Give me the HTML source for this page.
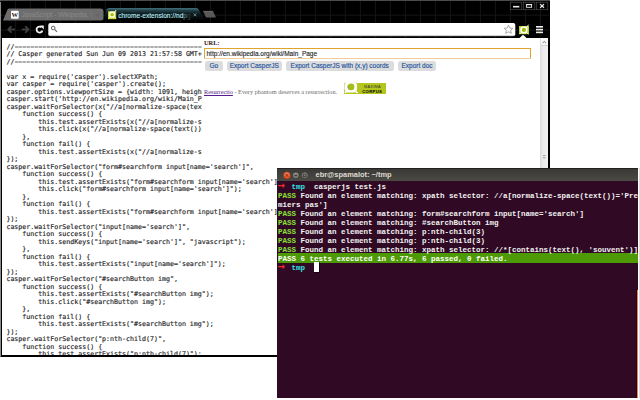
<!DOCTYPE html>
<html><head><meta charset="utf-8">
<style>
html,body{margin:0;padding:0;background:#fff;}
body{width:640px;height:400px;position:relative;overflow:hidden;font-family:"Liberation Sans",sans-serif;}
#br{position:absolute;left:0;top:0;width:550px;height:357px;background:#000;overflow:hidden;border-radius:2px 2px 0 1.5px;}
#content{position:absolute;left:2px;top:38px;width:546px;height:317px;background:#fff;overflow:hidden;}
pre#code{position:absolute;left:4.4px;top:5.6px;-webkit-text-stroke:0.14px #1e1e26;margin:0;font-family:"DejaVu Sans Mono","Liberation Mono",monospace;font-size:6.64px;line-height:7.5px;color:#1a1a1a;white-space:pre;}

#panel{position:absolute;left:200px;top:0;width:338px;height:124px;background:#fff;}
#panel .lbl{position:absolute;left:2px;top:0.4px;font-family:"Liberation Serif",serif;font-weight:bold;font-size:6.4px;line-height:9px;color:#301010;}
#panel .inp{position:absolute;left:2px;top:10.3px;width:327px;height:11.2px;border:1px solid #dfa52c;border-bottom-color:#f0cf9a;border-radius:1px;box-sizing:border-box;font-size:6.5px;line-height:9px;padding-left:1.5px;color:#1a1a22;-webkit-text-stroke:0.12px #1a1a22;background:#fff;}
.btn{position:absolute;top:23px;height:10.4px;background:#dcdcdc;border-radius:2.8px;font-size:6.5px;line-height:10.6px;color:#24549f;-webkit-text-stroke:0.15px #24549f;text-align:center;}
#tag{position:absolute;left:2px;top:49.5px;font-family:"Liberation Serif",serif;font-size:6.28px;line-height:8px;color:#6e6e6e;white-space:nowrap;}
#tag u{color:#551a8b;}
#logo{position:absolute;left:142px;top:44.8px;width:41.8px;height:11px;background:#b4c61c;}
#sb{position:absolute;left:538.3px;top:0;width:7.7px;height:317px;background:linear-gradient(90deg,#dcdcdc,#ececec 40%,#f1f1f1);}
#sb .up{position:absolute;left:0.7px;top:0;width:7px;height:7.6px;background:#fbfbfb;border-bottom:0.6px solid #d0d0d0;box-sizing:border-box;}

#term{position:absolute;left:277px;top:168px;width:361.4px;height:229.6px;background:#300a24;overflow:hidden;}
#tbar{position:absolute;left:0;top:0;width:362px;height:12.5px;background:linear-gradient(#3a3935,#4b4a45);border-top:0.5px solid #222;box-sizing:border-box;}
#tbar .t{position:absolute;left:38.5px;top:1.3px;font-size:7.45px;line-height:10px;font-weight:bold;color:#dfdbd2;white-space:nowrap;}
#tbar i{position:absolute;top:2.3px;width:7.4px;height:7.4px;border-radius:50%;box-sizing:border-box;}
pre#tt{position:absolute;left:1px;top:14.5px;margin:0;font-family:"Liberation Mono","DejaVu Sans Mono",monospace;font-size:7.5px;line-height:9px;color:#f2f2f2;white-space:pre;font-weight:bold;}
#tt .g{color:#8ae234;} #tt .r{color:#ef2929;font-family:"DejaVu Sans Mono",monospace;font-size:12px;font-weight:bold;display:inline-block;width:4.5px;height:9px;line-height:4.5px;vertical-align:top;overflow:visible;text-indent:-0.6px;} #tt .c{color:#34e2e2;}
#tt .bar{color:#fff;}
#gbar{position:absolute;left:0.6px;top:84.8px;width:361px;height:10px;background:#4e9a06;}
#cur{position:absolute;left:36.8px;top:94.3px;width:4.9px;height:9.6px;background:#fff;box-shadow:0.5px 0.5px 0 0.3px #12030c;}
#tsb{position:absolute;left:359px;top:121.5px;width:2.5px;height:108.5px;background:#f07c4a;border-left:0.8px solid #1a0512;box-sizing:border-box;}
#redge{position:absolute;left:638.5px;top:168px;width:1.5px;height:230px;background:#e2dcdc;}
#ledge{position:absolute;left:0;top:2px;width:1px;height:354px;background:#8c8c8c;}
#code .eq{color:#6c6c6c;-webkit-text-stroke:0;}
</style></head><body>
<div id="br">

<svg id="hdr" width="550" height="38" viewBox="0 0 550 38" style="position:absolute;left:0;top:0">
<defs>
<linearGradient id="atab" x1="0" y1="0" x2="0" y2="1"><stop offset="0" stop-color="#2c5560"/><stop offset="0.45" stop-color="#0c1c20"/><stop offset="1" stop-color="#000"/></linearGradient>
<linearGradient id="omni" x1="0" y1="0" x2="0" y2="1"><stop offset="0" stop-color="#fff"/><stop offset="0.9" stop-color="#fff"/><stop offset="1" stop-color="#999"/></linearGradient>
</defs>
<rect x="0" y="0" width="550" height="38" fill="#000"/>
<path d="M15.4,1V38M30.4,1V38M45.4,1V38M60.4,1V38M75.4,1V38M90.4,1V38M105.4,1V38M120.4,1V38M135.4,1V38M150.4,1V38M165.4,1V38M180.4,1V38M195.4,1V38M210.4,1V38M225.4,1V38M240.4,1V38M255.4,1V38M270.4,1V38M285.4,1V38M300.4,1V38M315.4,1V38M330.4,1V38M345.4,1V38M360.4,1V38M375.4,1V38M390.4,1V38M405.4,1V38M420.4,1V38M435.4,1V38M450.4,1V38M465.4,1V38M480.4,1V38M495.4,1V38M510.4,1V38M525.4,1V38M540.4,1V38M1,15.2H549M1,30.2H549" stroke="#171717" stroke-width="0.9" fill="none"/>
<rect x="0" y="0" width="550" height="1" fill="#4c4c4c"/>
<!-- inactive tab -->
<path d="M3,20.5 L7.5,9.5 Q8,8.4 9.5,8.4 L100.5,8.4 Q103.5,8.4 103.5,11.5 L103.5,18 Q103.5,20.5 101,20.5 Z" fill="#6d6d6d"/>
<rect x="11" y="10.8" width="7.7" height="7.9" rx="1" fill="#fff"/>
<text x="14.85" y="17" font-family="Liberation Serif,serif" font-size="6.5" font-weight="bold" text-anchor="middle" fill="#222">W</text>
<text x="21.5" y="17.3" font-family="Liberation Sans,sans-serif" font-size="6.6" fill="#8a8a8a">JavaScript - Wikipedia, <tspan fill="#7a7a7a">t</tspan></text>
<path d="M96.3,13.8 l2.5,2.5 m0,-2.5 l-2.5,2.5" stroke="#5a5a5a" stroke-width="0.7" fill="none"/>
<!-- active tab -->
<path d="M103.5,20.6 L106.5,10 Q107,8.3 109,8.3 L196,8.3 Q198,8.3 198.8,10 L205.5,20.6 Z" fill="url(#atab)"/>
<path d="M106.6,10 Q107,8.8 109,8.8 L196,8.8 Q198,8.8 198.6,10" stroke="#4a7884" stroke-width="1" fill="none"/>
<rect x="108" y="11.2" width="8.2" height="8" fill="#c9d61c"/>
<rect x="109.2" y="11.6" width="5.8" height="6.2" rx="1.8" fill="#fff"/>
<circle cx="112.1" cy="14.7" r="1.7" fill="#a0ba10"/>
<path d="M109.6,17.2 l-1,1.4 M114.6,17.2 l1.2,1.4 M114.5,12 l1.6,-2" stroke="#fff" stroke-width="0.9" fill="none"/>
<text x="118.2" y="17.5" font-family="Liberation Sans,sans-serif" font-size="7" textLength="72.5" lengthAdjust="spacingAndGlyphs" fill="#bdeaf5" stroke="#bdeaf5" stroke-width="0.12">chrome-extension://nd<tspan fill="#6f939c" stroke="none">p</tspan><tspan fill="#35484d" stroke="none">g</tspan></text>
<path d="M193.6,13.4 l2.8,2.8 m0,-2.8 l-2.8,2.8" stroke="#8a9ba2" stroke-width="0.85" fill="none"/>
<!-- new tab button -->
<path d="M203,11 L213,11 L216,17.5 L206,17.5 Z" fill="#585858"/><path d="M203.3,11.3 L213,11.3" stroke="#777" stroke-width="0.6"/>
<!-- toolbar -->
<path d="M8.4,29.4 h5.8 M8.2,29.4 l2.8,-2.7 M8.2,29.4 l2.8,2.7" stroke="#414141" stroke-width="1.8" fill="none" stroke-linecap="round"/>
<path d="M28.3,29.4 h-5.8 M28.5,29.4 l-2.8,-2.7 M28.5,29.4 l-2.8,2.7" stroke="#414141" stroke-width="1.8" fill="none" stroke-linecap="round"/>
<path d="M41.6,27.3 A3,3 0 1 0 42.4,30.6" stroke="#f2f2f2" stroke-width="1.8" fill="none"/>
<path d="M40,25.6 L43.8,25.6 L43.8,29.4 Z" fill="#f2f2f2"/>
<rect x="48.3" y="23.1" width="467" height="13.1" rx="2" fill="url(#omni)"/>
<circle cx="53.2" cy="28" r="1.8" stroke="#666" stroke-width="1" fill="none"/>
<path d="M54.6,29.4 L57,31.8" stroke="#666" stroke-width="1.2"/>
<!-- star -->
<path d="M508.5,25.2 L509.8,28 L512.8,28.3 L510.6,30.3 L511.3,33.3 L508.5,31.8 L505.7,33.3 L506.4,30.3 L504.2,28.3 L507.2,28 Z" fill="#fff" stroke="#888" stroke-width="0.7"/>
<!-- extension icon -->
<rect x="519" y="26" width="10" height="8.2" fill="#bccd1e"/>
<rect x="520.3" y="26.4" width="7.2" height="7" rx="2.3" fill="#fff"/>
<circle cx="523.9" cy="29.9" r="2.1" fill="#a0ba10"/>
<path d="M521,32.6 l-1.3,1.5 M526.8,32.6 l1.6,1.5 M526.8,27 l1.8,-2.3" stroke="#fff" stroke-width="1" fill="none"/>
<!-- menu -->
<rect x="536" y="26" width="7" height="1.6" fill="#eee"/>
<rect x="536" y="28.8" width="7" height="1.6" fill="#eee"/>
<rect x="536" y="31.6" width="7" height="1.6" fill="#eee"/>
<!-- popup arrow -->
<path d="M519.5,38 L523,34.8 L526.5,38 Z" fill="#fff"/>
<!-- window controls -->
<g fill="none" stroke="#4a4a4a" stroke-width="0.7">
<rect x="510.3" y="2.2" width="11.5" height="7.5"/><rect x="523.3" y="2.2" width="11.5" height="7.5"/><rect x="536.3" y="2.2" width="11.5" height="7.5"/>
</g>
<rect x="513" y="5.9" width="6.3" height="1.6" fill="#e8e8e8"/>
<rect x="526.6" y="4.6" width="5" height="2.7" fill="none" stroke="#e8e8e8" stroke-width="0.9"/><rect x="526.1" y="4" width="6" height="1.2" fill="#e8e8e8"/>
<path d="M540.2,4.1 l3.8,3.6 m0,-3.6 l-3.8,3.6" stroke="#e8e8e8" stroke-width="1.3" fill="none"/>
</svg>
<div id="ledge"></div>
<div id="content">
<pre id="code">//<span class="eq">==========================================================================</span>
// Casper generated Sun Jun 09 2013 21:57:58 GMT+0200 (CEST)
//<span class="eq">==========================================================================</span>

var x = require('casper').selectXPath;
var casper = require('casper').create();
casper.options.viewportSize = {width: 1091, height: 640};
casper.start('http://en.wikipedia.org/wiki/Main_Page');
casper.waitForSelector(x("//a[normalize-space(text())='Premiers pas']"),
    function success() {
        this.test.assertExists(x("//a[normalize-space(text())='Premiers pas']"));
        this.click(x("//a[normalize-space(text())='Premiers pas']"));
    },
    function fail() {
        this.test.assertExists(x("//a[normalize-space(text())='Premiers pas']"));
});
casper.waitForSelector("form#searchform input[name='search']",
    function success() {
        this.test.assertExists("form#searchform input[name='search']");
        this.click("form#searchform input[name='search']");
    },
    function fail() {
        this.test.assertExists("form#searchform input[name='search']");
});
casper.waitForSelector("input[name='search']",
    function success() {
        this.sendKeys("input[name='search']", "javascript");
    },
    function fail() {
        this.test.assertExists("input[name='search']");
});
casper.waitForSelector("#searchButton img",
    function success() {
        this.test.assertExists("#searchButton img");
        this.click("#searchButton img");
    },
    function fail() {
        this.test.assertExists("#searchButton img");
});
casper.waitForSelector("p:nth-child(7)",
    function success() {
        this.test.assertExists("p:nth-child(7)");
        this.click("p:nth-child(7)");
    },</pre>
<div id="panel">
<div class="lbl">URL:</div>
<div class="inp">http://en.wikipedia.org/wiki/Main_Page</div>
<div class="btn" style="left:3px;width:17.5px">Go</div>
<div class="btn" style="left:25px;width:54.5px">Export CasperJS</div>
<div class="btn" style="left:83.5px;width:108.5px">Export CasperJS with (x,y) coords</div>
<div class="btn" style="left:196px;width:38px">Export doc</div>
<div id="tag"><u>Resurrectio</u> - Every phantom deserves a resurrection.</div>
<div id="logo">
<svg width="42" height="11" viewBox="0 0 42 11" style="position:absolute;left:0;top:0;overflow:visible">
<rect x="0.5" y="-1.2" width="12.5" height="10.6" rx="3.6" fill="#fff" stroke="#e4e8d0" stroke-width="0.3"/>
<circle cx="7.1" cy="3.9" r="3.3" fill="#a4bd18"/>
<path d="M4.3,2.2 A3.3,3.3 0 0 0 5,6.4" stroke="#8a9560" stroke-width="0.8" fill="none"/>
<path d="M2.6,8 L1,10 M11.2,8 L13.6,10" stroke="#fff" stroke-width="1.6" fill="none"/><path d="M11.6,0 L14,-3.2" stroke="#e8ecd8" stroke-width="0.8" fill="none"/>
<text x="28.4" y="4.7" font-family="Liberation Sans,sans-serif" font-size="3.9" text-anchor="middle" fill="#333" letter-spacing="0.25">MAXIMA</text>
<text x="28.2" y="9.6" font-family="Liberation Sans,sans-serif" font-size="4.3" font-weight="bold" text-anchor="middle" fill="#000" letter-spacing="0.25">CORPUS</text>
</svg>
</div>
</div>
<div id="sb"><div class="up"></div><svg width="8" height="130" style="position:absolute;left:0;top:0"><path d="M2.4,5.2 L4.2,3.5 L6,5.2" stroke="#666" stroke-width="0.9" fill="none"/><path d="M3,117.6h2.6M3,119.8h2.6" stroke="#999" stroke-width="0.9" transform="translate(0,0)"/></svg></div>
</div>
</div>
<div id="redge"></div>
<div id="term">
<div id="tbar"><svg width="40" height="13" viewBox="0 0 40 13" style="position:absolute;left:0;top:0">
<defs><linearGradient id="cb" x1="0" y1="0" x2="0" y2="1"><stop offset="0" stop-color="#f4825a"/><stop offset="1" stop-color="#df4a1f"/></linearGradient>
<linearGradient id="gb" x1="0" y1="0" x2="0" y2="1"><stop offset="0" stop-color="#8f8e87"/><stop offset="1" stop-color="#6c6b65"/></linearGradient></defs>
<circle cx="9.9" cy="6.4" r="3.6" fill="url(#cb)" stroke="#7a2a12" stroke-width="0.6"/>
<path d="M8.6,5.1 l2.6,2.6 m0,-2.6 l-2.6,2.6" stroke="#7a2410" stroke-width="0.8" fill="none"/>
<circle cx="18.8" cy="6.4" r="3.5" fill="url(#gb)" stroke="#2f2e2b" stroke-width="0.7"/>
<path d="M17.3,6.5 h3" stroke="#3d3c38" stroke-width="0.9"/>
<circle cx="27.8" cy="6.4" r="3.5" fill="url(#gb)" stroke="#2f2e2b" stroke-width="0.7"/>
<rect x="26.5" y="5.1" width="2.6" height="2.6" fill="none" stroke="#3d3c38" stroke-width="0.8"/>
</svg><span class="t">ebr@spamalot: ~/tmp</span></div>
<div id="gbar"></div>
<pre id="tt"><span class="r">→</span>  <span class="c">tmp</span>  casperjs test.js
<span class="g">PASS</span> Found an element matching: xpath selector: //a[normalize-space(text())='Pre
miers pas']
<span class="g">PASS</span> Found an element matching: form#searchform input[name='search']
<span class="g">PASS</span> Found an element matching: #searchButton img
<span class="g">PASS</span> Found an element matching: p:nth-child(3)
<span class="g">PASS</span> Found an element matching: p:nth-child(3)
<span class="g">PASS</span> Found an element matching: xpath selector: //*[contains(text(), 'souvent')]
<span class="bar">PASS 6 tests executed in 6.77s, 6 passed, 0 failed.</span>
<span class="r">→</span>  <span class="c">tmp</span>  </pre>
<div id="cur"></div>
<div id="tsb"></div>
</div>
</body></html>
